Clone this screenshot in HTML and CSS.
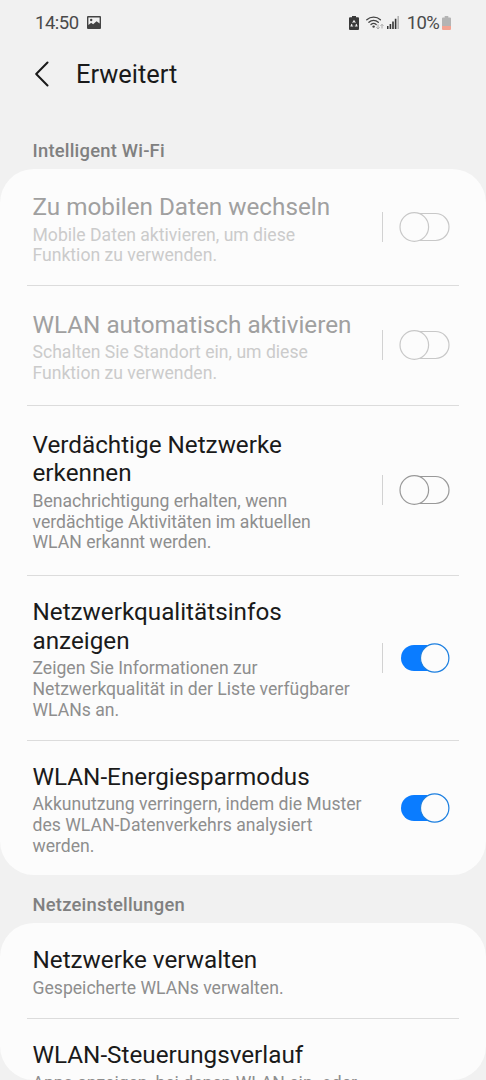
FILE: index.html
```
<!DOCTYPE html>
<html lang="de">
<head>
  <meta charset="UTF-8" />
  <meta name="viewport" content="width=device-width, initial-scale=1.0">
  <title>Erweitert</title>
  <link rel="stylesheet" href="styles.css">
</head>
<body>
  <div class="screen">
    <div class="status-bar">
      <span class="time">14:50</span>
      <svg class="icon-image" width="14" height="13" viewBox="0 0 14 13">
        <path fill="#444" fill-rule="evenodd" d="M1 0h12a1 1 0 0 1 1 1v11a1 1 0 0 1-1 1H1a1 1 0 0 1-1-1V1a1 1 0 0 1 1-1zM1.400 1.400V9l2.800-2.200 1.900 1.500 3.500-3 3 2.200V1.400z"/>
        <circle cx="4.200" cy="4" r="1.200" fill="#444"/>
      </svg>
      <div class="status-right">
        <svg width="10" height="14" viewBox="0 0 10 14">
          <path fill="#3a3a3a" d="M3 0h4v1.300h2a1 1 0 0 1 1 1V13a1 1 0 0 1-1 1H1a1 1 0 0 1-1-1V2.300a1 1 0 0 1 1-1h2z"/>
          <path fill="none" stroke="#f1f1f1" stroke-width="1.100" d="M3.700 6.700 5 4.800l1.300 1.900M7.100 8l.8 2H5.800M4.200 10H2.100L2.900 8"/>
        </svg>
        <svg class="icon-wifi" width="18" height="14" viewBox="0 0 18 14">
          <g fill="none" stroke="#444" stroke-width="1.300" stroke-linecap="round">
            <path d="M.8 3.700a10 10 0 0 1 13.600 0"/>
            <path d="M2.900 6.200a7 7 0 0 1 9.400 0"/>
            <path d="M5 8.500a4 4 0 0 1 5.200 0"/>
          </g>
          <circle cx="7.600" cy="10.600" r="1.200" fill="#444"/>
          <path fill="none" stroke="#aaa" d="M12 8.500v4.300M10.400 11.300l1.600 1.700 1.600-1.700M16 12.500V8.500M14.500 9.900 16 8.300l1.500 1.600"/>
        </svg>
        <svg class="icon-signal" width="12" height="13" viewBox="0 0 12 13">
          <path fill="#333" d="M0 10h1.500v3H0zM2.600 8h1.600v5H2.600zM5.200 5.500h1.600V13H5.200zM7.800 2.700h1.600V13H7.800z"/>
          <path fill="#b5b5b5" d="M10.400 0H12v13h-1.600z"/>
        </svg>
        <span class="percent">10%</span>
        <svg class="icon-battery" width="9" height="14" viewBox="0 0 9 14">
          <path fill="#b4b4b4" d="M2.700 0h3.600v1.500H8a1 1 0 0 1 1 1V10H0V2.500a1 1 0 0 1 1-1h1.700z"/>
          <path fill="#f3a392" d="M0 10h9v3a1 1 0 0 1-1 1H1a1 1 0 0 1-1-1z"/>
        </svg>
      </div>
    </div>

    <div class="header">
      <svg class="back" width="14" height="26" viewBox="0 0 14 26">
        <path d="M12.500 1.500 1.200 13l11.300 11.500"/>
      </svg>
      <h1>Erweitert</h1>
    </div>

    <h2 class="section-title">Intelligent Wi-Fi</h2>
    <div class="card">
      <div class="row row-mobile disabled">
        <div class="text">
          <div class="title">Zu mobilen Daten wechseln</div>
          <div class="desc">Mobile Daten aktivieren, um diese<br>Funktion zu verwenden.</div>
        </div>
        <span class="separator"></span>
        <svg class="toggle" width="52" height="30" viewBox="0 0 52 30">
          <rect class="track" x="5" y="1.500" width="45" height="27" rx="13.500"/>
          <circle class="thumb" cx="15.300" cy="15" r="14.300"/>
        </svg>
      </div>
      <div class="row row-auto disabled">
        <div class="text">
          <div class="title">WLAN automatisch aktivieren</div>
          <div class="desc">Schalten Sie Standort ein, um diese<br>Funktion zu verwenden.</div>
        </div>
        <span class="separator"></span>
        <svg class="toggle" width="52" height="30" viewBox="0 0 52 30">
          <rect class="track" x="5" y="1.500" width="45" height="27" rx="13.500"/>
          <circle class="thumb" cx="15.300" cy="15" r="14.300"/>
        </svg>
      </div>
      <div class="row row-detect">
        <div class="text">
          <div class="title">Verdächtige Netzwerke<br>erkennen</div>
          <div class="desc">Benachrichtigung erhalten, wenn<br>verdächtige Aktivitäten im aktuellen<br>WLAN erkannt werden.</div>
        </div>
        <span class="separator"></span>
        <svg class="toggle" width="52" height="30" viewBox="0 0 52 30">
          <rect class="track" x="5" y="1.500" width="45" height="27" rx="13.500"/>
          <circle class="thumb" cx="15.300" cy="15" r="14.300"/>
        </svg>
      </div>
      <div class="row row-quality">
        <div class="text">
          <div class="title">Netzwerkqualitätsinfos<br>anzeigen</div>
          <div class="desc">Zeigen Sie Informationen zur<br>Netzwerkqualität in der Liste verfügbarer<br>WLANs an.</div>
        </div>
        <span class="separator"></span>
        <svg class="toggle on" width="52" height="30" viewBox="0 0 52 30">
          <rect class="track" x="2" y="2" width="46" height="26" rx="13"/>
          <circle class="thumb" cx="35.700" cy="15" r="14.200"/>
        </svg>
      </div>
      <div class="row row-power">
        <div class="text">
          <div class="title">WLAN-Energiesparmodus</div>
          <div class="desc">Akkunutzung verringern, indem die Muster<br>des WLAN-Datenverkehrs analysiert<br>werden.</div>
        </div>
        <svg class="toggle on" width="52" height="30" viewBox="0 0 52 30">
          <rect class="track" x="2" y="2" width="46" height="26" rx="13"/>
          <circle class="thumb" cx="35.700" cy="15" r="14.200"/>
        </svg>
      </div>
    </div>

    <h2 class="section-title second">Netzeinstellungen</h2>
    <div class="card card-bottom">
      <div class="row row-manage">
        <div class="text">
          <div class="title">Netzwerke verwalten</div>
          <div class="desc">Gespeicherte WLANs verwalten.</div>
        </div>
      </div>
      <div class="row row-history">
        <div class="text">
          <div class="title">WLAN-Steuerungsverlauf</div>
          <div class="desc">Apps anzeigen, bei denen WLAN ein- oder</div>
        </div>
      </div>
    </div>
  </div>
</body>
</html>
```
FILE: styles.css
```
* {
  margin: 0;
  padding: 0;
  box-sizing: border-box;
}

body {
  font-family: Roboto, sans-serif;
  background: #f1f1f1;
  color: #1a1a1a;
  overflow: hidden;
}

.screen {
  width: 486px;
  height: 1080px;
  display: flex;
  flex-direction: column;
  overflow: hidden;
}

svg {
  display: block;
  flex: none;
}

.status-bar {
  height: 45px;
  flex: none;
  display: flex;
  align-items: center;
  padding: 0 35px;
  font-size: 18.5px;
  color: #4a4a4a;
}

.time {
  letter-spacing: -0.5px;
}

.icon-image {
  margin-left: 8px;
}

.status-right {
  display: flex;
  align-items: center;
  margin-left: auto;
}

.icon-wifi {
  margin-left: 7px;
}

.icon-signal {
  margin-left: 3px;
}

.percent {
  margin-left: 8px;
  letter-spacing: -0.7px;
}

.icon-battery {
  margin-left: 3px;
}

.header {
  height: 57px;
  flex: none;
  display: flex;
  align-items: center;
  padding-left: 35px;
}

.back {
  fill: none;
  stroke: #1a1a1a;
  stroke-width: 2;
  stroke-linecap: round;
  stroke-linejoin: round;
}

h1 {
  margin-left: 27px;
  font-size: 25.4px;
  font-weight: 400;
}

.section-title {
  height: 67px;
  flex: none;
  padding: 38px 32.500px 0;
  font-size: 18.4px;
  line-height: 22px;
  font-weight: 500;
  letter-spacing: 0.22px;
  color: #808080;
}

.section-title.second {
  height: 48px;
  padding-top: 19px;
}

.card {
  background: #fcfcfc;
  border-radius: 34px;
  padding: 0 27px;
  flex: none;
}

.card-bottom {
  height: 157px;
  overflow: hidden;
}

.row {
  display: flex;
  align-items: center;
  padding: 0 8px 1px 5.500px;
  border-bottom: 1px solid #dcdcdc;
}

.row:last-child {
  border-bottom: none;
}

.text {
  flex: 1;
  padding-top: 4px;
  white-space: nowrap;
}

.title {
  font-size: 24.25px;
  line-height: 28.5px;
}

.desc {
  margin-top: 3px;
  font-size: 17.6px;
  line-height: 20.7px;
  color: #8e8e8e;
}

.disabled .title {
  color: #a0a0a0;
}

.disabled .desc {
  color: #cbcbcb;
}

.separator {
  width: 1px;
  height: 30px;
  margin-right: 16px;
  background: #d2d2d2;
}

.toggle {
  fill: #fcfcfc;
  stroke: #999;
  stroke-width: 1.2;
}

.disabled .toggle {
  stroke: #c8c8c8;
}

.toggle.on .track {
  fill: #0a7cff;
  stroke: none;
}

.toggle.on .thumb {
  stroke: #1c7fe0;
}

.row-mobile {
  height: 117px;
  padding-bottom: 0;
}

.row-mobile .text {
  padding-top: 5px;
}

.row-auto {
  height: 120px;
}

.row-detect {
  height: 170px;
}

.row-quality {
  height: 165px;
}

.row-power {
  height: 134px;
}

.row-manage {
  height: 96px;
}

.row-manage .text {
  padding-top: 5px;
}

.row-history {
  height: 94px;
}
```
